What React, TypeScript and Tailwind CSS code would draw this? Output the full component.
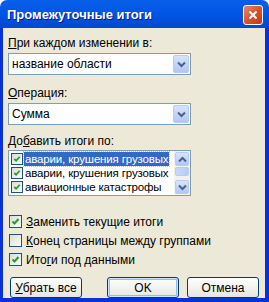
import React from "react";

const font = { fontFamily: '"Liberation Sans", Arial, sans-serif' };

function Chevron({ up = false }: { up?: boolean }) {
  return (
    <svg width="9" height="7" viewBox="0 0 9 7">
      <path
        d={up ? "M1 5.5 L4.5 2 L8 5.5" : "M1 1.5 L4.5 5 L8 1.5"}
        stroke="#4D6185"
        strokeWidth="2"
        fill="none"
      />
    </svg>
  );
}

function Check({ size = 13, checked = true }: { size?: number; checked?: boolean }) {
  return (
    <div
      className="flex items-center justify-center border border-[#1C5180] bg-gradient-to-br from-[#DCDCD7] to-[#FBFBF9] shrink-0"
      style={{ width: size, height: size }}
    >
      {checked && (
        <svg width={size - 4} height={size - 4} viewBox="0 0 9 9">
          <path d="M1.5 4.5 L3.5 6.5 L7.5 2" stroke="#21A121" strokeWidth="2" fill="none" />
        </svg>
      )}
    </div>
  );
}

function Select({ value }: { value: string }) {
  return (
    <div className="flex h-[22px] w-[183px] items-center border border-[#7F9DB9] bg-white pl-[3px] pr-[1px]">
      <span className="flex-1 text-[12px] text-black">{value}</span>
      <div className="flex h-[18px] w-[16px] items-center justify-center rounded-[2px] border border-[#B9CBF3] bg-gradient-to-b from-[#D8E4FD] to-[#B1C6F7]">
        <Chevron />
      </div>
    </div>
  );
}

function Btn({ label, u, def = false }: { label: string; u?: number; def?: boolean }) {
  return (
    <div
      className={
        "flex h-[21px] w-[72px] items-center justify-center rounded-[3px] border border-[#003C74] bg-gradient-to-b from-[#FFFFFF] to-[#E6E5DE] text-[12px] text-black " +
        (def ? "shadow-[inset_0_0_0_1px_#CEE7FF,inset_0_0_0_2px_#98B8EA]" : "")
      }
    >
      {u === undefined ? (
        label
      ) : (
        <span>
          {label.slice(0, u)}
          <span className="underline">{label[u]}</span>
          {label.slice(u + 1)}
        </span>
      )}
    </div>
  );
}

export default function App() {
  return (
    <div className="flex h-[302px] w-[269px] flex-col overflow-hidden" style={font}>
      {/* Title bar */}
      <div className="flex h-[29px] items-center rounded-t-[7px] bg-gradient-to-b from-[#0A5FE9] via-[#0055E5] to-[#0148D0] pl-[7px] pr-[6px] pt-[1px]">
        <span className="flex-1 text-[13px] font-bold text-white [text-shadow:1px_1px_0_#0A1882]">
          Промежуточные итоги
        </span>
        <div className="flex h-[20px] w-[20px] items-center justify-center rounded-[3px] border border-white bg-gradient-to-br from-[#E9876B] via-[#D8532C] to-[#C1391A]">
          <svg width="10" height="10" viewBox="0 0 10 10">
            <path d="M1.5 1.5 L8.5 8.5 M8.5 1.5 L1.5 8.5" stroke="white" strokeWidth="2" />
          </svg>
        </div>
      </div>
      {/* Body with frame */}
      <div className="flex flex-1 flex-col border-x-[3px] border-b-[4px] border-[#0831D9] border-r-[4px]">
        <div className="flex flex-1 flex-col bg-[#ECE9D8] px-[5px] text-[12px] text-black">
          <div className="mt-[8px] h-[14px] leading-[14px]">
            <span className="underline">П</span>ри каждом изменении в:
          </div>
          <div className="mt-[3px]">
            <Select value="название области" />
          </div>
          <div className="mt-[11px] h-[14px] leading-[14px]">
            <span className="underline">О</span>перация:
          </div>
          <div className="mt-[3px]">
            <Select value="Сумма" />
          </div>
          <div className="mt-[9px] h-[14px] leading-[14px]">
            До<span className="underline">б</span>авить итоги по:
          </div>
          <div className="mt-[2px] flex h-[46px] w-[183px] border border-[#7F9DB9] bg-white">
            <div className="flex min-w-0 flex-1 flex-col pl-[2px] pt-[1px]">
              {[
                ["аварии, крушения грузовых", true],
                ["аварии, крушения грузовых", false],
                ["авиационные катастрофы", false],
              ].map(([t, sel], i) => (
                <div key={i} className="flex h-[14px] items-center">
                  <div className="flex h-[14px] w-[13px] shrink-0 items-center justify-start">
                    <Check size={12} />
                  </div>
                  <span
                    className={
                      "whitespace-nowrap pl-[1px] pr-[1px] text-[11.5px] leading-[14px] tracking-[-0.15px] " +
                      (sel ? "bg-[#316AC5] text-white outline outline-1 outline-dotted outline-[#F0C060]" : "")
                    }
                  >
                    {t as string}
                  </span>
                </div>
              ))}
            </div>
            <div className="flex w-[16px] shrink-0 flex-col bg-[#F3F1EC] p-[1px]">
              <div className="flex h-[14px] items-center justify-center rounded-[2px] border border-[#B9CBF3] bg-gradient-to-b from-[#D8E4FD] to-[#B1C6F7]">
                <Chevron up />
              </div>
              <div className="mt-[1px] h-[9px] rounded-[2px] border border-[#B9CBF3] bg-gradient-to-r from-[#C9D8FC] to-[#B8CCF8]" />
              <div className="flex-1" />
              <div className="flex h-[14px] items-center justify-center rounded-[2px] border border-[#B9CBF3] bg-gradient-to-b from-[#D8E4FD] to-[#B1C6F7]">
                <Chevron />
              </div>
            </div>
          </div>
          <div className="mt-[19px] flex flex-col gap-[6px] pl-[1px]">
            <div className="flex h-[13px] items-center gap-[4px]">
              <Check />
              <span>
                <span className="underline">З</span>аменить текущие итоги
              </span>
            </div>
            <div className="flex h-[13px] items-center gap-[4px]">
              <Check checked={false} />
              <span>
                <span className="underline">К</span>онец страницы между группами
              </span>
            </div>
            <div className="flex h-[13px] items-center gap-[4px]">
              <Check />
              <span>
                Ито<span className="underline">г</span>и под данными
              </span>
            </div>
          </div>
          <div className="mt-[11px] flex pl-[2px]">
            <Btn label="Убрать все" u={0} />
            <div className="flex-1" />
            <div className="flex gap-[8px] pr-[1px]">
              <Btn label="OK" def />
              <Btn label="Отмена" />
            </div>
          </div>
        </div>
      </div>
    </div>
  );
}
